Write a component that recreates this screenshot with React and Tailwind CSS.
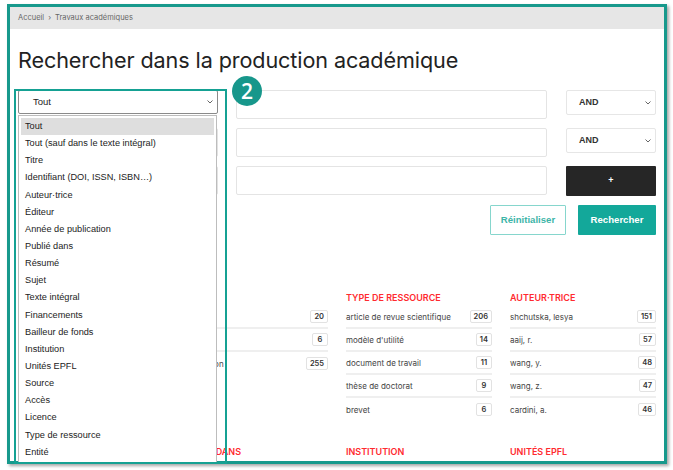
import React from 'react';

const FIELDS = [
  'Tout',
  'Tout (sauf dans le texte intégral)',
  'Titre',
  'Identifiant (DOI, ISSN, ISBN…)',
  'Auteur·trice',
  'Éditeur',
  'Année de publication',
  'Publié dans',
  'Résumé',
  'Sujet',
  'Texte intégral',
  'Financements',
  'Bailleur de fonds',
  'Institution',
  'Unités EPFL',
  'Source',
  'Accès',
  'Licence',
  'Type de ressource',
  'Entité',
];

// first column sits under the open list, so it is left empty
const FACETS = [
  { title: '', items: [] },
  {
    title: '',
    items: [
      ['', 20],
      ['', 6],
      ['publication', 255],
    ],
  },
  {
    title: 'Type de ressource',
    items: [
      ['article de revue scientifique', 206],
      ["modèle d'utilité", 14],
      ['document de travail', 11],
      ['thèse de doctorat', 9],
      ['brevet', 6],
    ],
  },
  {
    title: 'Auteur·trice',
    items: [
      ['shchutska, lesya', 151],
      ['aaij, r.', 57],
      ['wang, y.', 48],
      ['wang, z.', 47],
      ['cardini, a.', 46],
    ],
  },
  { title: '', items: [] },
  { title: 'Publié dans', items: [] },
  { title: 'Institution', items: [] },
  { title: 'Unités EPFL', items: [] },
];

const Chevron = ({ className = '' }) => (
  <svg width="6" height="4" viewBox="0 0 6 4" className={className}>
    <path d="M0.5 0.5 L3 3 L5.5 0.5" fill="none" stroke="#555" strokeWidth="0.9" />
  </svg>
);

const Facet = ({ title, items }) => (
  <div>
    <p className="mb-[1px] h-[14px] text-[9px] font-semibold uppercase leading-[14px] text-[#ff2a2f]">{title}</p>
    {items.map(([label, count], i) => (
      <div
        key={i}
        className={`flex h-[23px] items-center justify-between ${i < items.length - 1 ? 'border-b-2 border-[#efefef]' : ''}`}
      >
        <span className="text-[8px] text-[#444]">{label}</span>
        <span className="flex h-[13px] min-w-[16px] items-center justify-center rounded-[2px] border border-[#e2e2e2] px-[3px] text-[7.5px] font-semibold text-[#333]">
          {count}
        </span>
      </div>
    ))}
  </div>
);

const SearchRow = ({ first, last }) => (
  <div className="flex items-start gap-[18px]">
    <div
      className={`flex w-[200px] items-center justify-between rounded-[2px] border bg-white pl-[14px] pr-[4px] font-['Liberation_Sans',Arial,sans-serif] text-[9.5px] text-[#222] ${first ? 'h-[24px] border-[#8a8a8a]' : 'h-[29px] border-[#e2e2e2]'}`}
    >
      <span>{first ? 'Tout' : ''}</span>
      <Chevron />
    </div>
    <div className="h-[29px] flex-1 rounded-[2px] border border-[#e4e4e4] bg-white" />
    {last ? (
      <div className="ml-px flex h-[30px] w-[90px] items-center justify-center rounded-[1px] bg-[#262626] font-['Liberation_Sans',Arial,sans-serif] text-[9px] font-bold text-white">
        +
      </div>
    ) : (
      <div className="ml-px flex h-[25px] w-[90px] items-center justify-between rounded-[2px] border border-[#e6e6e6] bg-white pl-[12px] pr-[4px] font-['Liberation_Sans',Arial,sans-serif] text-[9px] font-bold text-[#333]">
        <span>AND</span>
        <Chevron />
      </div>
    )}
  </div>
);

export default function App() {
  return (
    <div className="relative h-[470px] w-[673px] overflow-hidden bg-white font-['Inter',sans-serif]">
      <div className="ml-[7px] mt-[4px] h-[460px] w-[660px] overflow-hidden border-[3px] border-[#17998c] bg-white shadow-[2px_2px_3px_rgba(0,0,0,0.35)]">
        <div className="flex h-[22px] items-center bg-[#e6e6e6] px-[8px] text-[7.5px] text-[#666]">
          Accueil <span className="mx-[4px]">›</span> Travaux académiques
        </div>

        <div className="px-[8px]">
          <h1 className="mt-[17px] text-[21.6px] font-normal leading-[28px] tracking-[-0.1px] text-[#222]">
            Rechercher dans la production académique
          </h1>

          <div className="mt-[16px] flex flex-col gap-[9px]">
            <SearchRow first />
            <SearchRow />
            <SearchRow last />
          </div>

          <div className="mt-[9px] flex justify-end gap-[12px] font-['Liberation_Sans',Arial,sans-serif] text-[9.6px] font-bold">
            <button className="h-[30px] w-[76px] rounded-[1px] border-[1.5px] border-[#86d6cd] bg-white text-[#3db5a8]">
              Réinitialiser
            </button>
            <button className="h-[30px] w-[78px] rounded-[1px] bg-[#13a89a] text-white">Rechercher</button>
          </div>

          <div className="mt-[56px] grid grid-cols-4 gap-x-[18px] gap-y-[24px]">
            {FACETS.map((f, i) => (
              <Facet key={i} {...f} />
            ))}
          </div>
        </div>
      </div>

      {/* open select list */}
      <div className="absolute left-[18px] top-[115px] h-[348px] w-[199px] border border-[#bdbdbd] bg-white px-[2px] pt-[2px] font-['Liberation_Sans',Arial,sans-serif] text-[9.2px] text-[#222]">
        {FIELDS.map((f, i) => (
          <div key={f} className={`h-[17.15px] px-[4px] leading-[17.15px] ${i === 0 ? 'bg-[#dedede]' : ''}`}>
            {f}
          </div>
        ))}
      </div>

      {/* annotation */}
      <div className="absolute left-[14px] top-[89px] h-[375px] w-[213px] border-2 border-[#15a193]" />
      <div className="absolute left-[232px] top-[76px] flex h-[30px] w-[30px] items-center justify-center rounded-full bg-[#17978b] font-['Open_Sans',sans-serif] text-[21px] font-semibold leading-none text-white">
        2
      </div>
    </div>
  );
}
